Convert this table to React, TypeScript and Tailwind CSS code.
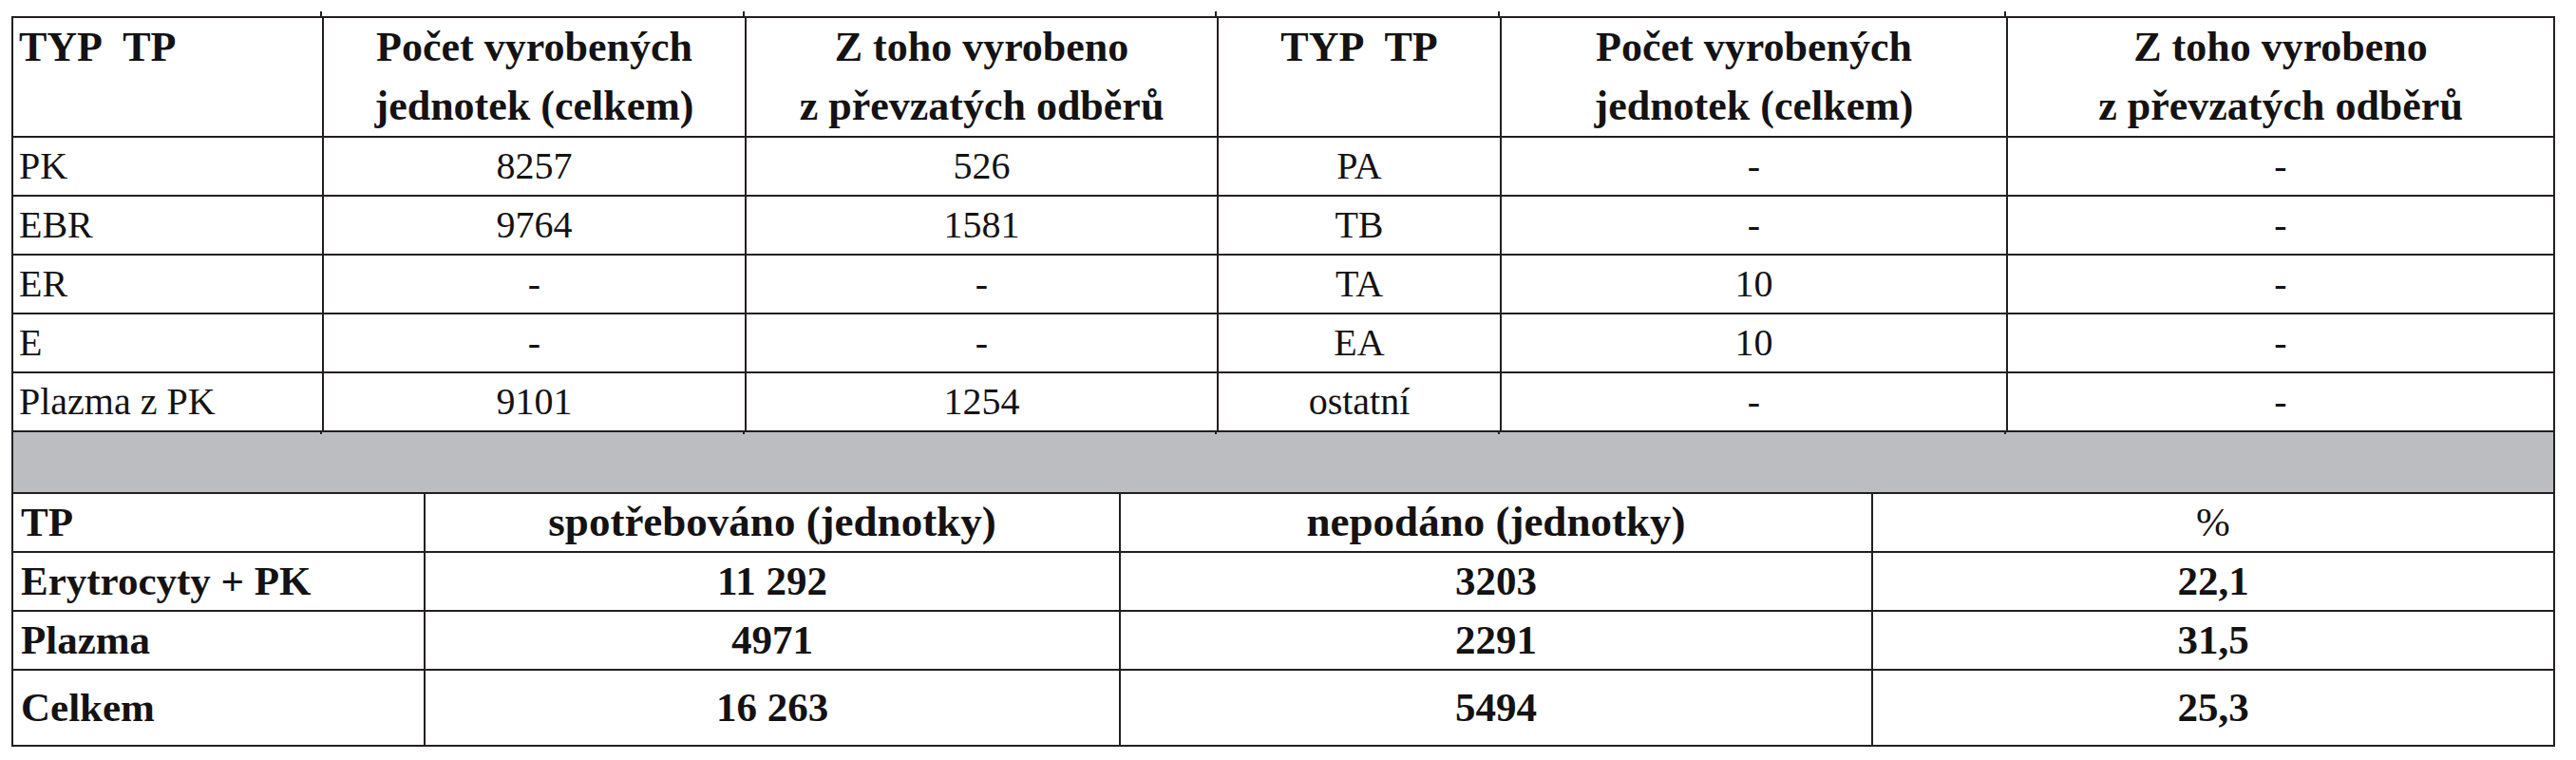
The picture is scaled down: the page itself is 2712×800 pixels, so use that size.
const topHead = [
  { lines: ["TYP\u00a0 TP"], align: "text-left pl-[6px]" },
  { lines: ["Počet vyrobených", "jednotek (celkem)"], align: "text-center" },
  { lines: ["Z toho vyrobeno", "z převzatých odběrů"], align: "text-center" },
  { lines: ["TYP\u00a0 TP"], align: "text-center" },
  { lines: ["Počet vyrobených", "jednotek (celkem)"], align: "text-center" },
  { lines: ["Z toho vyrobeno", "z převzatých odběrů"], align: "text-center" },
]

const topRows = [
  ["PK", "8257", "526", "PA", "-", "-"],
  ["EBR", "9764", "1581", "TB", "-", "-"],
  ["ER", "-", "-", "TA", "10", "-"],
  ["E", "-", "-", "EA", "10", "-"],
  ["Plazma z PK", "9101", "1254", "ostatní", "-", "-"],
]

const bottomHead = ["TP", "spotřebováno (jednotky)", "nepodáno (jednotky)", "%"]

const bottomRows = [
  ["Erytrocyty + PK", "11 292", "3203", "22,1"],
  ["Plazma", "4971", "2291", "31,5"],
  ["Celkem", "16 263", "5494", "25,3"],
]

const serif = "font-['Liberation_Serif','Times_New_Roman',serif]"

// small overshoot of the column rules past the frame, as in the scan
const tickTop =
  "relative before:absolute before:right-0 before:top-[-7px] before:w-[2px] before:h-[5px] before:bg-[#231f20]"
const tickBottom =
  "relative after:absolute after:right-0 after:bottom-[-4px] after:w-[2px] after:h-[4px] after:bg-[#231f20]"

export default function App() {
  return (
    <div className={`w-[2712px] h-[800px] bg-white pl-[12px] pt-[17px] text-[#141213] text-[40px] ${serif}`}>
      <div className="w-[2678px] border-2 border-[#231f20]">
        {/* production table */}
        <div className="grid grid-cols-[327px_445px_497px_298px_533px_1fr]">
          {topHead.map((h, i) => (
            <div
              key={"h" + i}
              className={`h-[126px] border-b-2 border-[#231f20] font-bold text-[44px] leading-[62px] ${
                i < 5 ? "border-r-2 " + tickTop : ""
              } ${h.align}`}
            >
              {h.lines.map((l) => (
                <div key={l}>{l}</div>
              ))}
            </div>
          ))}
          {topRows.map((row, r) =>
            row.map((cell, c) => (
              <div
                key={r + "-" + c}
                className={`h-[62px] flex items-center border-b-2 border-[#231f20] ${c < 5 ? "border-r-2" : ""} ${
                  c < 5 && r === 4 ? tickBottom : ""
                } ${c === 0 ? "justify-start pl-[6px]" : "justify-center"}`}
              >
                {cell}
              </div>
            )),
          )}
        </div>

        {/* grey divider */}
        <div className="h-[65px] bg-[#bcbdc0] border-b-2 border-[#231f20]" />

        {/* consumption table */}
        <div className="grid grid-cols-[434px_732px_792px_1fr] font-bold text-[43px]">
          {bottomHead.map((h, i) => (
            <div
              key={"bh" + i}
              className={`h-[62px] flex items-center border-b-2 border-[#231f20] ${i < 3 ? "border-r-2" : ""} ${
                i === 0 ? "justify-start pl-[8px]" : "justify-center"
              } ${i === 3 ? "font-normal" : ""} ${i === 1 || i === 2 ? "text-[45px]" : ""}`}
            >
              {h}
            </div>
          ))}
          {bottomRows.map((row, r) =>
            row.map((cell, c) => (
              <div
                key={"b" + r + "-" + c}
                className={`flex items-center border-[#231f20] ${r === 2 ? "h-[78px]" : "h-[62px] border-b-2"} ${
                  c < 3 ? "border-r-2" : ""
                } ${c === 0 ? "justify-start pl-[8px]" : "justify-center"}`}
              >
                {cell}
              </div>
            )),
          )}
        </div>
      </div>
    </div>
  )
}
